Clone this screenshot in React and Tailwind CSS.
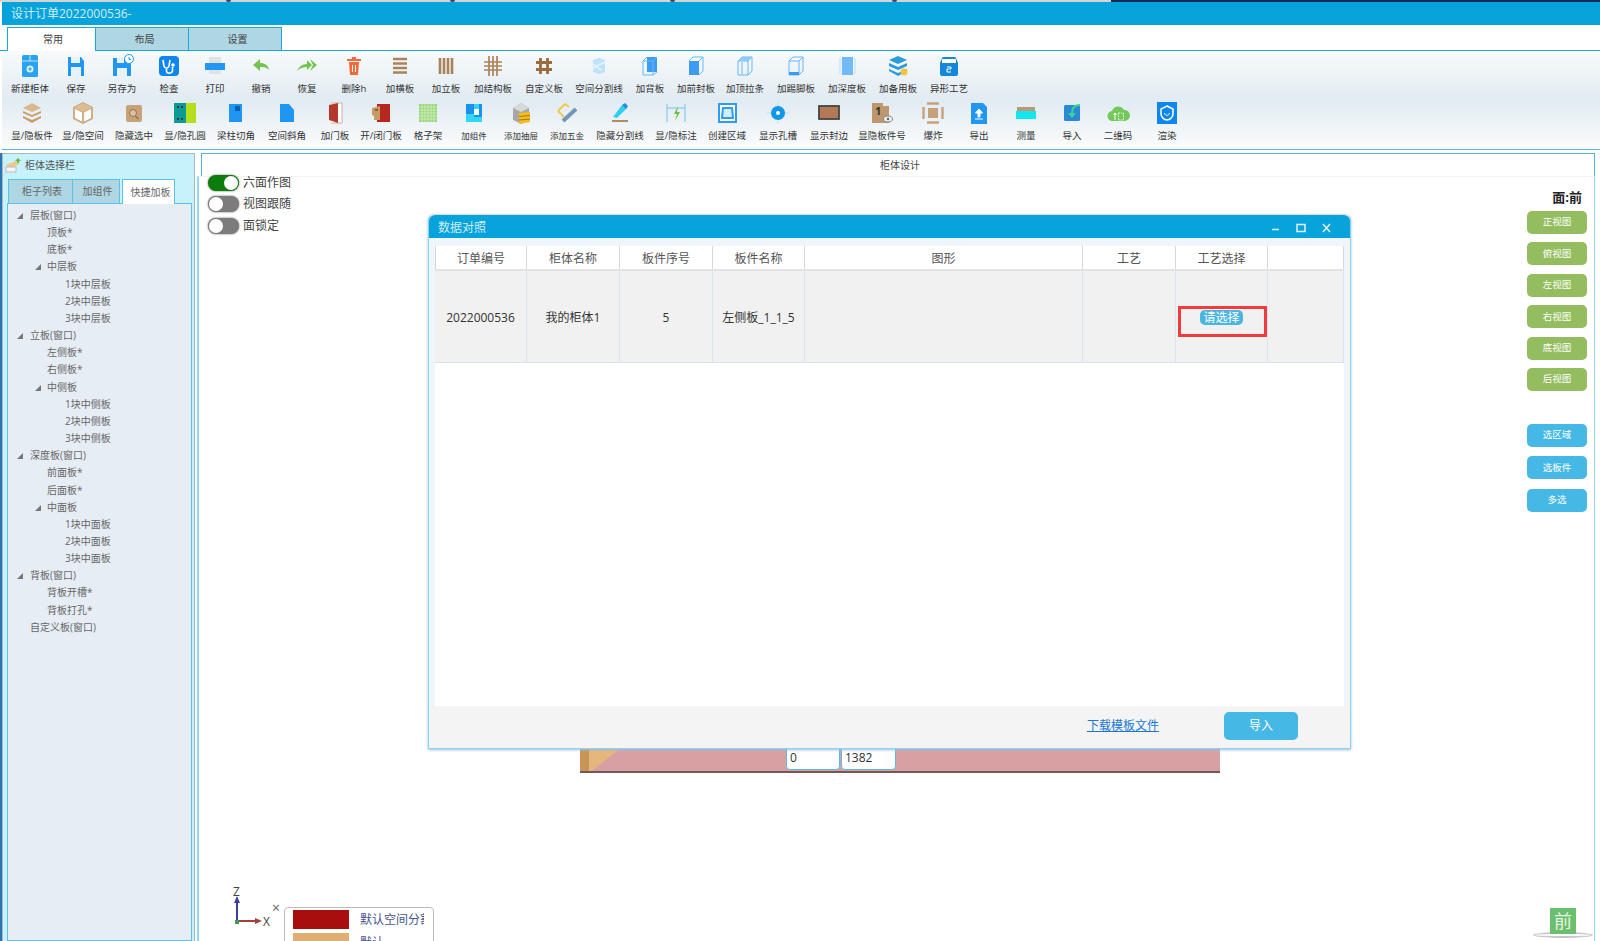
import React from 'react';

const ICONS = {
  new: <><rect x="4" y="1" width="16" height="22" rx="1.5" fill="#2aa3ee" /><path d="M4 7h16M12 1v6" stroke="#bfe6fb" strokeWidth="1" /><circle cx="12" cy="15" r="3.5" fill="#d8f1fd" /><path d="M10 15h4M12 13v4" stroke="#2aa3ee" /></>,
  save: <><path d="M4 3h13l3 4v15H4z" fill="#2196f3" /><rect x="7" y="3" width="9" height="6" fill="#e6f3fd" /><rect x="7" y="13" width="10" height="9" fill="#e6f3fd" /></>,
  saveAs: <><path d="M3 4h14l4 4v14H3z" fill="#2196f3" /><rect x="7" y="4" width="7" height="5" fill="#e6f3fd" /><rect x="7" y="14" width="10" height="8" fill="#e6f3fd" /><circle cx="19" cy="5" r="4.5" fill="#fff" stroke="#2196f3" /><path d="M19 3v2.500h2" stroke="#2196f3" fill="none" /></>,
  check: <><rect x="2" y="2" width="20" height="20" rx="4" fill="#0f86ee" /><path d="M6 6l1 6c1 3 4 3 5 0l1-6M9.500 15v2c0 3 5 3 6 0v-4" stroke="#fff" strokeWidth="1.600" fill="none" /><circle cx="16" cy="11" r="1.800" fill="#fff" /></>,
  print: <><rect x="6" y="3" width="12" height="6" fill="#dfe3e6" /><rect x="2" y="9" width="20" height="7" fill="#2196f3" /><rect x="6" y="16" width="12" height="4" fill="#dfe3e6" /></>,
  undo: <path d="M4 11l7-6v4c5 0 8 2 9 7-2-2.500-5-3-9-3v4z" fill="#72c34f" />,
  redo: <><path d="M2 17c2-4 5-7 10-7V6l5 5-5 5v-3c-4 0-7 1-10 4z" fill="#72c34f" /><path d="M15 5l7 6-7 6 3-6z" fill="#72c34f" /></>,
  del: <><path d="M7 8h10l-1 13H8z" fill="#f26a3a" /><path d="M5 6h14M10 4h4" stroke="#f26a3a" strokeWidth="2" /><path d="M10.500 11v7M13.500 11v7" stroke="#fff" /></>,
  hboard: <path d="M5 5h14M5 9.500h14M5 14h14M5 18.500h14" stroke="#a9825a" strokeWidth="2.600" />,
  vboard: <path d="M6 4v16M10 4v16M14 4v16M18 4v16" stroke="#a9825a" strokeWidth="2.600" />,
  struct: <path d="M3 8h18M3 12h18M3 16h18M8 2v20M12 2v20M16 2v20" stroke="#ad835a" strokeWidth="1.700" />,
  custom: <path d="M4 8.500h16M4 15.500h16M8.500 4v16M15.500 4v16" stroke="#9a6b3f" strokeWidth="2.800" />,
  split: <><path d="M6 6l6-2 6 2v12l-6 2-6-2z" fill="#bfe1fa" /><path d="M6 14l12-6M6 10l8 6" stroke="#e6f4fe" strokeWidth="1.500" /></>,
  back: <><rect x="9" y="3" width="10" height="15" fill="#3c9bf2" /><path d="M9 3L5 7v14h10l4-3M5 7h10v14M15 7l4-4" stroke="#66b8f7" fill="none" /></>,
  front: <><path d="M5 7h10v14H5z" fill="#3c9bf2" /><path d="M5 7l4-4h10v14l-4 4M15 7l4-4" stroke="#66b8f7" fill="none" /></>,
  top: <><path d="M5 7h10v14H5zM5 7l4-4h10v14l-4 4M15 7l4-4" stroke="#66b8f7" fill="none" /><path d="M5 7l4-4h10l-4 4z" fill="#8fcdf8" /><path d="M9 8v12" stroke="#66b8f7" /></>,
  kick: <><path d="M5 7h10v14H5zM5 7l4-4h10v14l-4 4M15 7l4-4" stroke="#66b8f7" fill="none" /><path d="M5 18h10v3H5z" fill="#3c9bf2" /></>,
  depth: <><rect x="7" y="3" width="11" height="18" fill="#72baf6" /><path d="M5 4v16M20 4v16" stroke="#c8e6fb" strokeWidth="1.500" /></>,
  spare: <><path d="M12 2l9 4-9 4-9-4z" fill="#2a9be0" /><path d="M3 9l9 4 9-4v3l-9 4-9-4zM3 15l9 4 9-4v2l-9 5-9-5z" fill="#2a9be0" /><circle cx="18" cy="18" r="3.500" fill="#f2c53b" /></>,
  shape: <><path d="M3 9l2-5a2 2 0 012-1h10a2 2 0 012 1l2 5v11a2 2 0 01-2 2H5a2 2 0 01-2-2z" fill="#1488d8" /><path d="M5 9h14V5H5z" fill="#fff" /><path d="M10 13h4v2h-4v3h4" stroke="#fff" fill="none" /></>,
  showBoard: <><path d="M12 2l9 5-9 4-9-4z" fill="#dcb88d" /><path d="M3 10l9 4 9-4v2l-9 4-9-4zM3 15l9 4 9-4v2l-9 5-9-5z" fill="#c99c69" /></>,
  showSpace: <><path d="M12 2l9 4.500v11L12 22l-9-4.500v-11z" fill="#fff" stroke="#cda77b" strokeWidth="1.800" /><path d="M3 6.500l9 4.500 9-4.500M12 11v11" stroke="#cda77b" strokeWidth="1.800" fill="none" /><path d="M12 2l9 4.500-9 4.500-9-4.500z" fill="#dcbc94" /></>,
  hideSel: <><rect x="4" y="4" width="16" height="17" rx="2" fill="#c9a27a" /><circle cx="11" cy="12" r="3.500" fill="#dcc2a4" stroke="#96724f" /><path d="M13.500 15l3 3" stroke="#96724f" strokeWidth="1.500" /></>,
  hole: <><rect x="1" y="2" width="12" height="20" fill="#0c9a94" /><rect x="13" y="2" width="10" height="20" fill="#b5df1c" /><g fill="#123"><circle cx="5" cy="6" r="1" /><circle cx="9" cy="6" r="1" /><circle cx="5" cy="18" r="1" /><circle cx="9" cy="18" r="1" /></g></>,
  beam: <><rect x="5" y="3" width="13" height="18" fill="#1f96f2" /><rect x="11" y="5" width="5" height="5" fill="#0d5faa" /></>,
  slope: <path d="M5 3h9l5 6v12H5z" fill="#1f96f2" />,
  door: <><path d="M8 2h11v20H8" fill="#fff" stroke="#d8a8a2" /><path d="M6 4l9-2v20l-9-3z" fill="#b23a2a" /></>,
  openDoor: <><path d="M8 3h13v18H8z" fill="#b6271f" /><path d="M3 7l8-2v14H5v-4l-2-1z" fill="#c89a66" /><rect x="6" y="8" width="3" height="2" fill="#8a5a33" /></>,
  grid: <><rect x="3" y="3" width="18" height="18" fill="#98d678" /><path d="M6 3v18M9 3v18M12 3v18M15 3v18M18 3v18M3 6h18M3 9h18M3 12h18M3 15h18M3 18h18" stroke="#d5efc6" strokeWidth=".8" /></>,
  comp: <><path d="M4 3h16v18H4z" fill="#1a90f0" /><path d="M4 13h8V3h5v10h-5v3h8v5H4z" fill="#2fd7f2" /><path d="M12 8h5v6h-5z" fill="#fff" /></>,
  drawer: <><path d="M4 7l8-5 8 5v12l-8 4-8-4z" fill="#a8a8a8" /><path d="M12 2l8 5-8 4-8-4z" fill="#d8d8d8" /><path d="M10 12l11-1v10l-11 2z" fill="#f5bd1f" /><path d="M10 15.500l11-1M10 19l11-1" stroke="#a87a10" /></>,
  hardware: <><path d="M3 10l7-7 4 3" stroke="#f0c94a" strokeWidth="1.800" fill="none" /><path d="M3 10l6 6" stroke="#f0c94a" strokeWidth="1.800" /><path d="M8 20L21 8" stroke="#7097b8" strokeWidth="4" /></>,
  hideSplit: <><path d="M5 16l9-12 5 3-10 10z" fill="#2ed0ef" /><path d="M14 4l3-2 3 3-2 3z" fill="#1f8de0" /><path d="M4 20h16" stroke="#b58a5e" strokeWidth="2" /></>,
  label: <><path d="M3 3v18M21 3v18M3 7h18" stroke="#6fc5ef" fill="none" /><path d="M14 5l-4 8h3l-2 7 5-9h-3z" fill="#6cc142" /></>,
  region: <><rect x="4" y="3" width="17" height="18" fill="#fff" stroke="#2f9cf2" strokeWidth="2" /><path d="M8 7h9l1 10H7z" fill="#d4ecfd" stroke="#2f9cf2" strokeWidth="2" /></>,
  holeShow: <><path d="M12 1v22M1 12h22" stroke="#a8e6fb" /><circle cx="12" cy="12" r="7" fill="#1297e8" /><circle cx="12" cy="12" r="2" fill="#fff" /></>,
  edge: <rect x="2" y="5" width="20" height="13" fill="#b37a55" stroke="#444" strokeWidth="1.800" />,
  num: <><path d="M2 2h11v3h6v17H2z" fill="#bd976e" /><text x="5" y="14" fontSize="11" fontWeight="700" fill="#333">1</text><ellipse cx="18" cy="18" rx="4.500" ry="3" fill="#eee" stroke="#888" /><circle cx="18" cy="18" r="1.200" fill="#666" /></>,
  explode: <><rect x="7" y="7" width="10" height="10" fill="#c5a27c" /><path d="M6 2.500h12M6 21.500h12M2.500 6v12M21.500 6v12" stroke="#c5a27c" strokeWidth="2.400" /></>,
  exportFile: <><path d="M4 2h12l4 4v17H4z" fill="#1f96f2" /><path d="M12 8l-3.500 4H11v4h2v-4h2.500zM8 18h8" stroke="#fff" fill="#fff" /></>,
  measure: <><rect x="3" y="6" width="18" height="4" fill="#b99a75" /><rect x="2" y="10" width="20" height="8" fill="#12e6f2" /></>,
  importFile: <><rect x="4" y="4" width="16" height="16" rx="1.500" fill="#2a88d8" /><path d="M20 4c-5 0-8 2-8 8v2" stroke="#35d98c" strokeWidth="2" fill="none" /><path d="M8 12l4 5 4-5z" fill="#35d98c" /></>,
  qr: <><path d="M7 20a5 5 0 01-1-10 6.500 6.500 0 0112-1 5.500 5.500 0 011 11z" fill="#74c95a" /><path d="M9 19v-7M7.500 14L9 12l1.500 2" stroke="#fff" fill="none" /><path d="M12.500 12h5v7h-5z" fill="none" stroke="#e6f6df" strokeDasharray="1.500 1" /></>,
  render: <><rect x="2" y="1" width="20" height="22" fill="#0e86f0" /><path d="M12 5l6 3v5c0 3-3 6-6 6s-6-3-6-6V8z" fill="none" stroke="#fff" strokeWidth="1.500" /><path d="M9.500 12c.5 3 4.500 3 5 0" fill="none" stroke="#fff" /></>,
};

const ROW1 = [
  ['新建柜体', 'w-[46px]', 'new'], ['保存', 'w-[46px]', 'save'], ['另存为', 'w-[46px]', 'saveAs'], ['检查', 'w-[48px]', 'check'],
  ['打印', 'w-[44px]', 'print'], ['撤销', 'w-[48px]', 'undo'], ['恢复', 'w-[44px]', 'redo'], ['删除h', 'w-[50px]', 'del'],
  ['加横板', 'w-[42px]', 'hboard'], ['加立板', 'w-[50px]', 'vboard'], ['加结构板', 'w-[44px]', 'struct'], ['自定义板', 'w-[58px]', 'custom'],
  ['空间分割线', 'w-[52px]', 'split'], ['加背板', 'w-[50px]', 'back'], ['加前封板', 'w-[42px]', 'front'], ['加顶拉条', 'w-[56px]', 'top'],
  ['加踢脚板', 'w-[46px]', 'kick'], ['加深度板', 'w-[56px]', 'depth'], ['加备用板', 'w-[46px]', 'spare'], ['异形工艺', 'w-[56px]', 'shape'],
];

const ROW2 = [
  ['显/隐板件', 'w-[50px]', 'showBoard'], ['显/隐空间', 'w-[52px]', 'showSpace'], ['隐藏选中', 'w-[50px]', 'hideSel'], ['显/隐孔圆', 'w-[52px]', 'hole'],
  ['梁柱切角', 'w-[50px]', 'beam'], ['空间斜角', 'w-[52px]', 'slope'], ['加门板', 'w-[44px]', 'door'], ['开/闭门板', 'w-[48px]', 'openDoor'],
  ['格子架', 'w-[46px]', 'grid'], ['加组件', 'w-[46px]', 'comp', true], ['添加抽屉', 'w-[48px]', 'drawer', true], ['添加五金', 'w-[44px]', 'hardware', true],
  ['隐藏分割线', 'w-[62px]', 'hideSplit'], ['显/隐标注', 'w-[50px]', 'label'], ['创建区域', 'w-[52px]', 'region'], ['显示孔槽', 'w-[50px]', 'holeShow'],
  ['显示封边', 'w-[52px]', 'edge'], ['显隐板件号', 'w-[54px]', 'num'], ['爆炸', 'w-[48px]', 'explode'], ['导出', 'w-[44px]', 'exportFile'],
  ['测量', 'w-[50px]', 'measure'], ['导入', 'w-[42px]', 'importFile'], ['二维码', 'w-[50px]', 'qr'], ['渲染', 'w-[48px]', 'render'],
];

const TREE = [
  [0, '层板(窗口)', true], [1, '顶板*'], [1, '底板*'], [1, '中层板', true], [2, '1块中层板'], [2, '2块中层板'], [2, '3块中层板'],
  [0, '立板(窗口)', true], [1, '左侧板*'], [1, '右侧板*'], [1, '中侧板', true], [2, '1块中侧板'], [2, '2块中侧板'], [2, '3块中侧板'],
  [0, '深度板(窗口)', true], [1, '前面板*'], [1, '后面板*'], [1, '中面板', true], [2, '1块中面板'], [2, '2块中面板'], [2, '3块中面板'],
  [0, '背板(窗口)', true], [1, '背板开槽*'], [1, '背板打孔*'], [0, '自定义板(窗口)'],
];

const INDENT = ['pl-[22px]', 'pl-[39px]', 'pl-[57px]'];
const ARROW = ['left-[9px]', 'left-[27px]'];

const ToolRow = ({ items }) => (
  <div className="flex h-[47px] pl-[5px]">
    {items.map(([label, width, icon, small]) => (
      <div key={label} className={`${width} shrink-0 flex flex-col items-center`}>
        <svg viewBox="0 0 24 24" className="w-6 h-6 shrink-0">{ICONS[icon]}</svg>
        <span className={`mt-[5px] h-3 leading-3 whitespace-nowrap text-[#333] ${small ? 'text-[8.5px]' : 'text-[9.5px]'}`}>{label}</span>
      </div>
    ))}
  </div>
);

const Toggle = ({ on, label }) => (
  <div className="flex items-center h-[21.5px]">
    <div className={`w-[31px] h-4 rounded-full flex items-center shadow-[0_0_2px_#555] ${on ? 'bg-[#0a7d0a] justify-end pr-px' : 'bg-[#7c7c7c] pl-px'}`}>
      <div className="w-[14px] h-[14px] rounded-full bg-white" />
    </div>
    <span className="ml-1 text-xs text-[#444]">{label}</span>
  </div>
);

const SideButton = ({ label, color }) => (
  <div className={`w-[60px] h-[23px] rounded-[5px] ${color} text-white text-[9.5px] flex items-center justify-center`}>{label}</div>
);

const TABLE_COLS = 'grid grid-cols-[92px_93px_93px_92px_278px_93px_92px_76px]';

const DataDialog = () => (
  <div className="absolute left-[231px] top-[61px] w-[923px] h-[535px] rounded-t-md bg-[#eef6fc] border border-[#8fd3ee] border-t-[#dcdcdc] shadow-[0_1px_3px_#9bd] flex flex-col z-10">
    <div className="h-[23px] shrink-0 rounded-t-md bg-[#09a3db] flex items-center px-[9px] pt-[2px] text-xs text-[#cfeef9]">
      <span className="flex-1">数据对照</span>
      <svg viewBox="0 0 72 16" className="w-[72px] h-4 -mr-[2px]" fill="none" stroke="#dff4fb">
        <path d="M1 9.500h7" strokeWidth="1.500" />
        <rect x="26" y="4.500" width="8" height="7" strokeWidth="1.500" />
        <path d="M52 4l7 8M59 4l-7 8" strokeWidth="1.500" />
      </svg>
    </div>
    <div className="flex-1 mx-[6px] mt-[8px] bg-white">
      <div className={`${TABLE_COLS} h-[25px] border-b-2 border-[#e3e3e3] text-xs text-[#555]`}>
        {['订单编号', '柜体名称', '板件序号', '板件名称', '图形', '工艺', '工艺选择', ''].map((h, i) => (
          <div key={i} className="flex items-center justify-center pt-[2px] border-r border-[#d8d8d8] first:border-l">{h}</div>
        ))}
      </div>
      <div className={`${TABLE_COLS} h-[92px] bg-[#f1f1f1] border-b border-[#d5e3f0] text-xs text-[#333]`}>
        {['2022000536', '我的柜体1', '5', '左侧板_1_1_5', '', ''].map((c, i) => (
          <div key={i} className="flex items-center justify-center pt-[2px] border-r border-[#dbe5f0]">{c}</div>
        ))}
        <div className="relative flex items-center justify-center pt-[2px] border-r border-[#dbe5f0]">
          <div className="w-[43px] h-[15px] rounded-[5px] bg-[#4ab6e0] text-white text-xs leading-[15px] text-center">请选择</div>
          <div className="absolute left-[2px] right-0 top-[35px] h-[31px] border-[3px] border-[#f23c3c]" />
        </div>
        <div className="border-r border-[#dbe5f0]" />
      </div>
    </div>
    <div className="h-[42px] shrink-0 bg-[#f4f4f4] flex items-center justify-end pb-[2px] pr-[52px]">
      <span className="text-xs text-[#1878d8] underline mr-[65px]">下载模板文件</span>
      <div className="w-[74px] h-[28px] rounded-[5px] bg-[#45b8e6] text-white text-xs flex items-center justify-center">导入</div>
    </div>
  </div>
);

const BoardBehind = () => (
  <div className="absolute left-[383px] top-[590px] w-[640px] h-[30px] bg-[#d9a0a3] border-b-2 border-[#6f5a5a] overflow-hidden">
    <svg viewBox="0 0 50 30" className="absolute left-0 top-0 w-[50px] h-[30px]">
      <rect width="9" height="30" fill="#c99556" />
      <path d="M9 0h38L9 30z" fill="#e6b77c" />
    </svg>
    <div className="absolute left-[206px] top-0 w-[54px] h-[27px] bg-white border border-[#60b8e0] rounded-b-sm text-xs text-[#333] leading-[28px] pl-[3px]">0</div>
    <div className="absolute left-[261px] top-0 w-[55px] h-[27px] bg-white border border-[#60b8e0] rounded-b-sm text-xs text-[#333] leading-[28px] pl-[3px]">1382</div>
  </div>
);

const Axis = () => (
  <svg viewBox="0 0 60 50" className="absolute left-[28px] top-[728px] w-[60px] h-[50px]">
    <text x="8" y="15" fontSize="12" fill="#444">Z</text>
    <path d="M12 19v22" stroke="#3b3f9b" strokeWidth="2" />
    <path d="M12 15l-3 7h6z" fill="#3b3f9b" />
    <path d="M12 40h21" stroke="#a33f3f" strokeWidth="2" />
    <path d="M37 40l-7-3v6z" fill="#a33f3f" />
    <path d="M10 39h4v4h-4z" fill="#3a9a5a" />
    <text x="38" y="45" fontSize="12" fill="#444">X</text>
  </svg>
);

const Legend = () => (
  <>
    <span className="absolute left-[75px] top-[748px] text-sm leading-[14px] text-[#666]">×</span>
    <div className="absolute left-[87px] top-[754px] w-[150px] h-[60px] bg-white border border-[#bbb] rounded-t-sm px-2 pt-[2px] overflow-hidden">
      <div className="flex items-center h-[19px] text-xs text-[#47558f]">
        <div className="w-[56px] h-[19px] bg-[#a80e0e] shrink-0" />
        <span className="ml-[11px] whitespace-nowrap w-[64px] overflow-hidden">默认空间分割</span>
      </div>
      <div className="flex items-center h-[19px] mt-1 text-xs text-[#47558f]">
        <div className="w-[56px] h-[19px] bg-[#dfae72] shrink-0" />
        <span className="ml-[11px]">默认</span>
      </div>
    </div>
  </>
);

const App = () => (
  <div className="relative w-[1600px] h-[941px] overflow-hidden bg-white font-['Open_Sans','Noto_Sans_CJK_SC',sans-serif] flex flex-col">
    <div className="relative h-[2px] shrink-0 flex">
      <div className="w-[1111px] bg-[#d4d4d4]" />
      <div className="flex-1 bg-[#0d2f55]" />
      <span className="absolute left-[226px] top-0 w-[5px] h-[2px] rounded-b-full bg-[#3c4a6b]" />
      <span className="absolute left-[450px] top-0 w-[5px] h-[2px] rounded-b-full bg-[#3c4a6b]" />
      <span className="absolute left-[670px] top-0 w-[5px] h-[2px] rounded-b-full bg-[#3c4a6b]" />
      <span className="absolute left-[892px] top-0 w-[5px] h-[2px] rounded-b-full bg-[#3c4a6b]" />
    </div>
    <div className="h-[23px] shrink-0 ml-[2px] bg-[#09a3db] flex items-center pl-[9px] text-xs text-[#cfeef9]">设计订单2022000536-</div>

    <div className="h-[26px] shrink-0 flex items-end pl-[7px] border-b border-[#19a8dc] text-[10px] text-[#444]">
      <div className="w-[89px] h-[24px] -mb-px bg-white border border-b-0 border-[#19a8dc] flex items-center justify-center pl-[3px]">常用</div>
      <div className="w-[93px] h-[23px] bg-[#aed6e3] border border-l-0 border-b-0 border-[#19a8dc] flex items-center justify-center pl-[5px]">布局</div>
      <div className="w-[93px] h-[23px] bg-[#aed6e3] border border-l-0 border-b-0 border-[#19a8dc] flex items-center justify-center pl-[5px]">设置</div>
    </div>

    <div className="h-[99px] shrink-0 ml-[2px] pt-[3px] border-b border-[#5ab9dd] bg-gradient-to-b from-[#f8fafb] via-[#e1ebf2] to-[#fbfcfd]">
      <ToolRow items={ROW1} />
      <ToolRow items={ROW2} />
    </div>

    <div className="flex-1 flex pt-[3px] min-h-0">
      <div className="w-[2px] shrink-0 bg-[#2a74b4]" />
      <div className="w-[193px] shrink-0 bg-[#c5f2fb] border-t border-x border-[#aab8bd] flex flex-col">
        <div className="h-[24px] shrink-0 flex items-center pb-[2px] text-[10px] text-[#555]">
          <svg viewBox="0 0 20 16" className="w-5 h-4">
            <path d="M3 8l10-4 3 3-10 5z" fill="#eec88a" />
            <rect x="3" y="10" width="10" height="5" fill="#f5f5f5" stroke="#bbb" />
            <path d="M15 1l3 3h-2v2h-2V4h-2z" fill="#69b83d" />
          </svg>
          <span className="ml-[2px]">柜体选择栏</span>
        </div>
        <div className="h-[25px] shrink-0 flex items-end pl-[5px] text-[10px] text-[#666]">
          <div className="w-[65px] h-[24px] bg-[#aed6e3] border border-b-0 border-[#5bc0ea] flex items-center justify-center pl-[3px]">柜子列表</div>
          <div className="w-[47px] h-[24px] bg-[#aed6e3] border border-l-0 border-b-0 border-[#5bc0ea] flex items-center justify-center pl-[3px]">加组件</div>
          <div className="w-[53px] h-[25px] ml-[2px] -mb-px z-10 bg-white border border-b-0 border-[#5bc0ea] flex items-center justify-center pl-[4px]">快捷加板</div>
        </div>
        <div className="flex-1 ml-[4px] mr-[2px] bg-[#e6edf5] border border-[#5bc0ea] pt-[3px]">
          {TREE.map(([level, label, open]) => (
            <div key={label} className={`relative h-[17.170px] leading-[17px] text-[10px] text-[#666] ${INDENT[level]}`}>
              {open && (
                <span className={`absolute top-[6px] ${ARROW[level]} w-0 h-0 border-l-[6px] border-l-transparent border-b-[6px] border-b-[#777]`} />
              )}
              {label}
            </div>
          ))}
        </div>
      </div>

      <div className="relative flex-1 min-w-0 mr-[5px] ml-[2px] flex flex-col">
        <div className="h-[23px] shrink-0 ml-[4px] pl-[4px] border-t border-l border-r border-[#4db6e0] bg-white text-[10px] text-[#444] flex items-center justify-center">柜体设计</div>
        <div className="flex-1 flex justify-between border-l-2 border-r border-[#8fd8f2] border-t border-t-[#f3f3f3]">
          <div className="pl-[9px] flex flex-col -mt-[5px] z-[1]">
            <Toggle on label="六面作图" />
            <Toggle label="视图跟随" />
            <Toggle label="面锁定" />
          </div>
          <div className="w-[60px] mr-[7px] flex flex-col">
            <div className="mt-[11px] h-[18px] leading-[18px] text-right pr-[5px] text-[13px] font-bold text-[#222]">面:前</div>
            <div className="mt-[5px] flex flex-col gap-[8.400px]">
              <SideButton label="正视图" color="bg-[#93bd5e]" />
              <SideButton label="俯视图" color="bg-[#93bd5e]" />
              <SideButton label="左视图" color="bg-[#93bd5e]" />
              <SideButton label="右视图" color="bg-[#93bd5e]" />
              <SideButton label="底视图" color="bg-[#93bd5e]" />
              <SideButton label="后视图" color="bg-[#93bd5e]" />
            </div>
            <div className="mt-[33px] flex flex-col gap-[9.500px]">
              <SideButton label="选区域" color="bg-[#45b8e6]" />
              <SideButton label="选板件" color="bg-[#45b8e6]" />
              <SideButton label="多选" color="bg-[#45b8e6]" />
            </div>
          </div>
        </div>

        <BoardBehind />
        <DataDialog />
        <Axis />
        <Legend />

        <div className="absolute left-[1353px] top-[755px] w-[26px] h-[26px] bg-[#6cbf6c] text-[#e6f6e6] text-lg leading-[26px] text-center z-[1]">前</div>
        <div className="absolute left-[1336px] top-[779px] w-[60px] h-[6px] rounded-[50%] border-2 border-[#c8c8c8]" />
      </div>
    </div>
  </div>
);

export default App;
